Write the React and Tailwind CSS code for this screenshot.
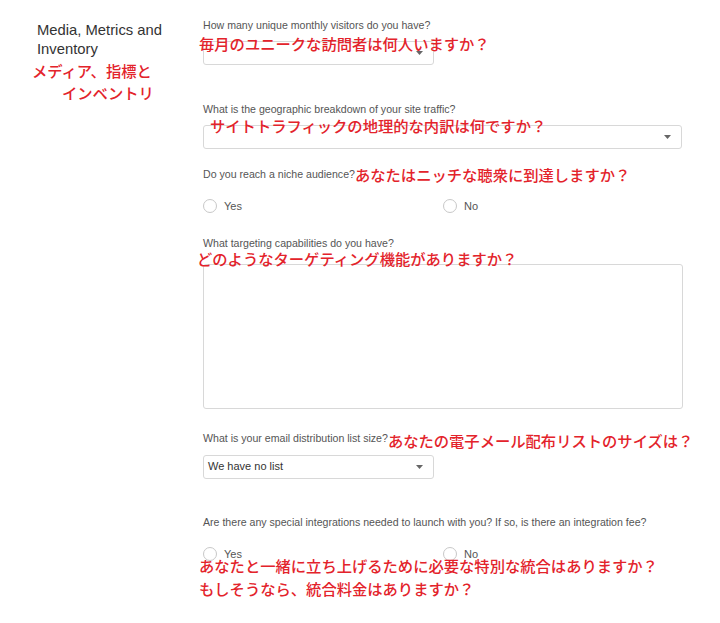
const sans = { fontFamily: '"Liberation Sans", Arial, sans-serif' }
const jp = { fontFamily: '"Noto Sans CJK JP", sans-serif' }

function Note({ children, className = '' }) {
  return (
    <span className={`text-[15.3px] font-medium leading-[22px] text-[#e3232b] whitespace-nowrap ${className}`} style={jp}>
      {children}
    </span>
  )
}

function Label({ children }) {
  return (
    <div className="flex items-center h-[14px] text-[10.6px] text-[#555] whitespace-nowrap">
      {children}
    </div>
  )
}

function Select({ value, className = '' }) {
  return (
    <div className={`h-[24px] flex items-center justify-between border border-[#d8d8d8] rounded-[3px] bg-white pl-[4px] pr-[10px] ${className}`}>
      <span className="text-[11px] text-[#333]">{value}</span>
      <svg width="7" height="4" viewBox="0 0 7 4"><path d="M0 0h7L3.5 4z" fill="#666" /></svg>
    </div>
  )
}

function Radio({ label }) {
  return (
    <div className="flex items-center gap-[7px]">
      <span className="w-[14px] h-[14px] rounded-full border border-[#c8c8c8] bg-white" />
      <span className="text-[11px] text-[#555]">{label}</span>
    </div>
  )
}

export default function App() {
  return (
    <div className="w-[720px] h-[623px] bg-white flex overflow-hidden" style={sans}>
      {/* Section title */}
      <div className="w-[203px] shrink-0 pt-[21px] pl-[37px]">
        <h2 className="text-[14.8px] leading-[19px] text-[#333]">
          Media, Metrics and
          <br />
          Inventory
        </h2>
        <div className="flex flex-col -ml-[5px]">
          <Note>メディア、指標と</Note>
          <Note className="pl-[30px]">インベントリ</Note>
        </div>
      </div>

      {/* Form */}
      <div className="w-[480px] pt-[19px] flex flex-col">
        <div className="relative">
          <Label>How many unique monthly visitors do you have?</Label>
          <Select className="w-[231px] mt-[8px]" />
          <Note className="absolute left-[-4px] top-[13px]">毎月のユニークな訪問者は何人いますか？</Note>
        </div>

        <div className="relative mt-[38px]">
          <Label>What is the geographic breakdown of your site traffic?</Label>
          <Select className="w-[479px] mt-[8px]" />
          <Note className="absolute left-[7px] top-[11px]">サイトトラフィックの地理的な内訳は何ですか？</Note>
        </div>

        <div className="mt-[19px]">
          <Label>
            Do you reach a niche audience?
            <Note className="leading-[14px] -translate-y-[1px]">あなたはニッチな聴衆に到達しますか？</Note>
          </Label>
          <div className="grid grid-cols-2 mt-[16px]">
            <Radio label="Yes" />
            <Radio label="No" />
          </div>
        </div>

        <div className="relative mt-[22px]">
          <Label>What targeting capabilities do you have?</Label>
          <textarea className="block w-[480px] h-[145px] mt-[13px] border border-[#d8d8d8] rounded-[3px] resize-none outline-none" />
          <Note className="absolute left-[-6px] top-[10px]">どのようなターゲティング機能がありますか？</Note>
        </div>

        <div className="mt-[23px]">
          <Label>
            What is your email distribution list size?
            <Note className="leading-[14px] translate-y-[1px]">あなたの電子メール配布リストのサイズは？</Note>
          </Label>
          <Select value="We have no list" className="w-[231px] mt-[9px]" />
        </div>

        <div className="relative mt-[37px]">
          <Label>Are there any special integrations needed to launch with you? If so, is there an integration fee?</Label>
          <div className="grid grid-cols-2 mt-[16px]">
            <Radio label="Yes" />
            <Radio label="No" />
          </div>
          <div className="absolute left-[-4px] top-[38px] flex flex-col">
            <Note className="leading-[23px]">あなたと一緒に立ち上げるために必要な特別な統合はありますか？</Note>
            <Note className="leading-[23px]">もしそうなら、統合料金はありますか？</Note>
          </div>
        </div>
      </div>
    </div>
  )
}
